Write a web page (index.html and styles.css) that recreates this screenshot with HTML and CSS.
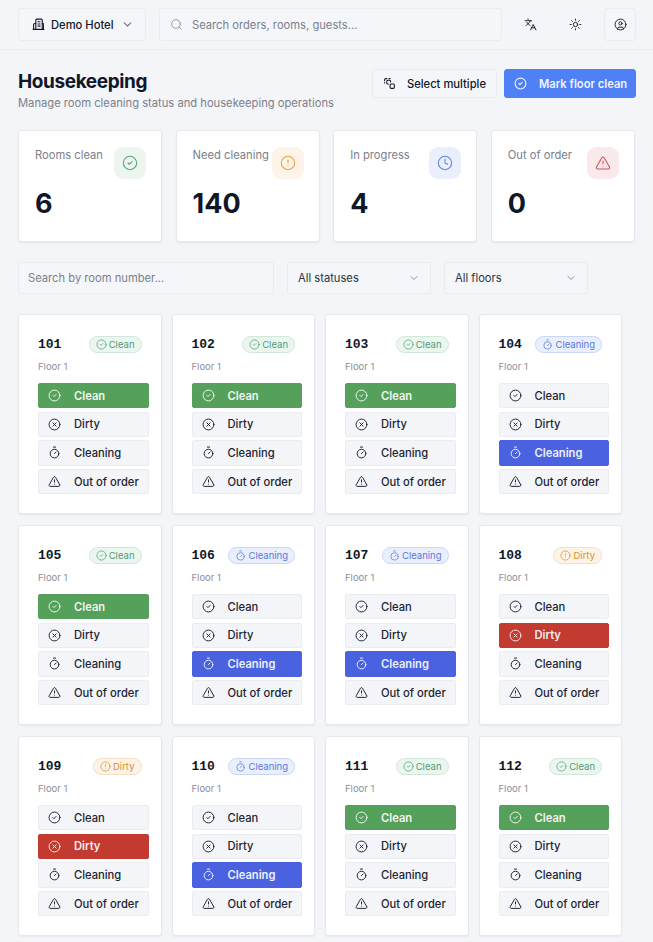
FILE: index.html
```html
<!DOCTYPE html>
<html lang="en">
  <head>
    <meta charset="utf-8" />
    <link rel="stylesheet" href="styles.css">
    <title>Housekeeping</title>
  </head>

  <body>
    <svg class="sprites" width="0" height="0">
      <symbol id="i-check" viewBox="0 0 24 24"><circle cx="12" cy="12" r="10"/><path d="m9 12 2 2 4-4"/></symbol>
      <symbol id="i-x" viewBox="0 0 24 24"><circle cx="12" cy="12" r="10"/><path d="m15 9-6 6"/><path d="m9 9 6 6"/></symbol>
      <symbol id="i-timer" viewBox="0 0 24 24"><path d="M10 2h4"/><path d="m12 14 3-3"/><circle cx="12" cy="14" r="8"/></symbol>
      <symbol id="i-warn" viewBox="0 0 24 24"><path d="m21.73 18-8-14a2 2 0 0 0-3.48 0l-8 14A2 2 0 0 0 4 21h16a2 2 0 0 0 1.73-3"/><path d="M12 9v4"/><path d="M12 17h.01"/></symbol>
      <symbol id="i-alert" viewBox="0 0 24 24"><circle cx="12" cy="12" r="10"/><path d="M12 8v4"/><path d="M12 16h.01"/></symbol>
      <symbol id="i-clock" viewBox="0 0 24 24"><circle cx="12" cy="12" r="10"/><path d="M12 6v6l4 2"/></symbol>
      <symbol id="i-chevron" viewBox="0 0 24 24"><path d="m6 9 6 6 6-6"/></symbol>
    </svg>

    <header class="topbar">
      <button class="hotel">
        <svg class="icon" viewBox="0 0 24 24"><path d="M7 21V4a2 2 0 0 1 2-2h8a2 2 0 0 1 2 2v17"/><path d="M7 10H5a2 2 0 0 0-2 2v9"/><path d="M19 10h2v11"/><path d="M2 21h20"/><path d="M11 7h4"/><path d="M11 11h4"/><path d="M11 15h4"/></svg>
        Demo Hotel
        <svg class="chev"><use href="#i-chevron"/></svg>
      </button>
      <div class="topsearch">
        <svg class="icon" viewBox="0 0 24 24"><circle cx="11" cy="11" r="8"/><path d="m21 21-4.3-4.3"/></svg>
        Search orders, rooms, guests...
      </div>
      <div class="topicons">
        <span class="topicon"><svg class="icon" viewBox="0 0 24 24"><path d="m5 8 6 6"/><path d="m4 14 6-6 2-3"/><path d="M2 5h12"/><path d="M7 2h1"/><path d="m22 22-5-10-5 10"/><path d="M14 18h6"/></svg></span>
        <span class="topicon"><svg class="icon" viewBox="0 0 24 24"><circle cx="12" cy="12" r="4"/><path d="M12 2v2"/><path d="M12 20v2"/><path d="m4.93 4.93 1.41 1.41"/><path d="m17.66 17.66 1.41 1.41"/><path d="M2 12h2"/><path d="M20 12h2"/><path d="m6.34 17.66-1.41 1.41"/><path d="m19.07 4.93-1.41 1.41"/></svg></span>
        <span class="topicon boxed"><svg class="icon" viewBox="0 0 24 24"><circle cx="12" cy="12" r="10"/><circle cx="12" cy="10" r="3"/><path d="M7 20.66V19a2 2 0 0 1 2-2h6a2 2 0 0 1 2 2v1.66"/></svg></span>
      </div>
    </header>

    <main class="page">
      <div class="pagehead">
        <div>
          <h1>Housekeeping</h1>
          <p>Manage room cleaning status and housekeeping operations</p>
        </div>
        <div class="actions">
          <button class="btn">
            <svg class="icon" viewBox="0 0 24 24"><path d="M3 7V5c0-1.1.9-2 2-2h2"/><path d="M3 11v-1"/><path d="M11 3h2"/><path d="M14 9V8a2 2 0 0 0-2-2H9a2 2 0 0 0-2 2v3a2 2 0 0 0 2 2h1"/><rect x="13" y="13" width="8" height="8" rx="2"/></svg>
            Select multiple
          </button>
          <button class="btn primary"><svg class="icon"><use href="#i-check"/></svg>Mark floor clean</button>
        </div>
      </div>

      <section class="stats">
        <div class="stat"><div class="stat-label">Rooms clean</div><span class="stat-icon green"><svg class="icon"><use href="#i-check"/></svg></span><div class="stat-value">6</div></div>
        <div class="stat"><div class="stat-label">Need cleaning</div><span class="stat-icon orange"><svg class="icon"><use href="#i-alert"/></svg></span><div class="stat-value">140</div></div>
        <div class="stat"><div class="stat-label">In progress</div><span class="stat-icon blue"><svg class="icon"><use href="#i-clock"/></svg></span><div class="stat-value">4</div></div>
        <div class="stat"><div class="stat-label">Out of order</div><span class="stat-icon red"><svg class="icon"><use href="#i-warn"/></svg></span><div class="stat-value">0</div></div>
      </section>

      <section class="filters">
        <div class="filter-search">Search by room number...</div>
        <div class="filter-select">All statuses<svg class="chev"><use href="#i-chevron"/></svg></div>
        <div class="filter-select">All floors<svg class="chev"><use href="#i-chevron"/></svg></div>
      </section>

      <section class="rooms" id="rooms">
        <article class="room">
          <div class="room-head"><span class="room-no">101</span><span class="badge clean"><svg class="icon"><use href="#i-check"/></svg>Clean</span></div>
          <div class="floor">Floor 1</div>
          <div class="status-btn on-clean"><svg class="icon"><use href="#i-check"/></svg>Clean</div>
          <div class="status-btn"><svg class="icon"><use href="#i-x"/></svg>Dirty</div>
          <div class="status-btn"><svg class="icon"><use href="#i-timer"/></svg>Cleaning</div>
          <div class="status-btn"><svg class="icon"><use href="#i-warn"/></svg>Out of order</div>
        </article>
        <article class="room">
          <div class="room-head"><span class="room-no">102</span><span class="badge clean"><svg class="icon"><use href="#i-check"/></svg>Clean</span></div>
          <div class="floor">Floor 1</div>
          <div class="status-btn on-clean"><svg class="icon"><use href="#i-check"/></svg>Clean</div>
          <div class="status-btn"><svg class="icon"><use href="#i-x"/></svg>Dirty</div>
          <div class="status-btn"><svg class="icon"><use href="#i-timer"/></svg>Cleaning</div>
          <div class="status-btn"><svg class="icon"><use href="#i-warn"/></svg>Out of order</div>
        </article>
        <article class="room">
          <div class="room-head"><span class="room-no">103</span><span class="badge clean"><svg class="icon"><use href="#i-check"/></svg>Clean</span></div>
          <div class="floor">Floor 1</div>
          <div class="status-btn on-clean"><svg class="icon"><use href="#i-check"/></svg>Clean</div>
          <div class="status-btn"><svg class="icon"><use href="#i-x"/></svg>Dirty</div>
          <div class="status-btn"><svg class="icon"><use href="#i-timer"/></svg>Cleaning</div>
          <div class="status-btn"><svg class="icon"><use href="#i-warn"/></svg>Out of order</div>
        </article>
        <article class="room">
          <div class="room-head"><span class="room-no">104</span><span class="badge cleaning"><svg class="icon"><use href="#i-timer"/></svg>Cleaning</span></div>
          <div class="floor">Floor 1</div>
          <div class="status-btn"><svg class="icon"><use href="#i-check"/></svg>Clean</div>
          <div class="status-btn"><svg class="icon"><use href="#i-x"/></svg>Dirty</div>
          <div class="status-btn on-cleaning"><svg class="icon"><use href="#i-timer"/></svg>Cleaning</div>
          <div class="status-btn"><svg class="icon"><use href="#i-warn"/></svg>Out of order</div>
        </article>
        <article class="room">
          <div class="room-head"><span class="room-no">105</span><span class="badge clean"><svg class="icon"><use href="#i-check"/></svg>Clean</span></div>
          <div class="floor">Floor 1</div>
          <div class="status-btn on-clean"><svg class="icon"><use href="#i-check"/></svg>Clean</div>
          <div class="status-btn"><svg class="icon"><use href="#i-x"/></svg>Dirty</div>
          <div class="status-btn"><svg class="icon"><use href="#i-timer"/></svg>Cleaning</div>
          <div class="status-btn"><svg class="icon"><use href="#i-warn"/></svg>Out of order</div>
        </article>
        <article class="room">
          <div class="room-head"><span class="room-no">106</span><span class="badge cleaning"><svg class="icon"><use href="#i-timer"/></svg>Cleaning</span></div>
          <div class="floor">Floor 1</div>
          <div class="status-btn"><svg class="icon"><use href="#i-check"/></svg>Clean</div>
          <div class="status-btn"><svg class="icon"><use href="#i-x"/></svg>Dirty</div>
          <div class="status-btn on-cleaning"><svg class="icon"><use href="#i-timer"/></svg>Cleaning</div>
          <div class="status-btn"><svg class="icon"><use href="#i-warn"/></svg>Out of order</div>
        </article>
        <article class="room">
          <div class="room-head"><span class="room-no">107</span><span class="badge cleaning"><svg class="icon"><use href="#i-timer"/></svg>Cleaning</span></div>
          <div class="floor">Floor 1</div>
          <div class="status-btn"><svg class="icon"><use href="#i-check"/></svg>Clean</div>
          <div class="status-btn"><svg class="icon"><use href="#i-x"/></svg>Dirty</div>
          <div class="status-btn on-cleaning"><svg class="icon"><use href="#i-timer"/></svg>Cleaning</div>
          <div class="status-btn"><svg class="icon"><use href="#i-warn"/></svg>Out of order</div>
        </article>
        <article class="room">
          <div class="room-head"><span class="room-no">108</span><span class="badge dirty"><svg class="icon"><use href="#i-alert"/></svg>Dirty</span></div>
          <div class="floor">Floor 1</div>
          <div class="status-btn"><svg class="icon"><use href="#i-check"/></svg>Clean</div>
          <div class="status-btn on-dirty"><svg class="icon"><use href="#i-x"/></svg>Dirty</div>
          <div class="status-btn"><svg class="icon"><use href="#i-timer"/></svg>Cleaning</div>
          <div class="status-btn"><svg class="icon"><use href="#i-warn"/></svg>Out of order</div>
        </article>
        <article class="room">
          <div class="room-head"><span class="room-no">109</span><span class="badge dirty"><svg class="icon"><use href="#i-alert"/></svg>Dirty</span></div>
          <div class="floor">Floor 1</div>
          <div class="status-btn"><svg class="icon"><use href="#i-check"/></svg>Clean</div>
          <div class="status-btn on-dirty"><svg class="icon"><use href="#i-x"/></svg>Dirty</div>
          <div class="status-btn"><svg class="icon"><use href="#i-timer"/></svg>Cleaning</div>
          <div class="status-btn"><svg class="icon"><use href="#i-warn"/></svg>Out of order</div>
        </article>
        <article class="room">
          <div class="room-head"><span class="room-no">110</span><span class="badge cleaning"><svg class="icon"><use href="#i-timer"/></svg>Cleaning</span></div>
          <div class="floor">Floor 1</div>
          <div class="status-btn"><svg class="icon"><use href="#i-check"/></svg>Clean</div>
          <div class="status-btn"><svg class="icon"><use href="#i-x"/></svg>Dirty</div>
          <div class="status-btn on-cleaning"><svg class="icon"><use href="#i-timer"/></svg>Cleaning</div>
          <div class="status-btn"><svg class="icon"><use href="#i-warn"/></svg>Out of order</div>
        </article>
        <article class="room">
          <div class="room-head"><span class="room-no">111</span><span class="badge clean"><svg class="icon"><use href="#i-check"/></svg>Clean</span></div>
          <div class="floor">Floor 1</div>
          <div class="status-btn on-clean"><svg class="icon"><use href="#i-check"/></svg>Clean</div>
          <div class="status-btn"><svg class="icon"><use href="#i-x"/></svg>Dirty</div>
          <div class="status-btn"><svg class="icon"><use href="#i-timer"/></svg>Cleaning</div>
          <div class="status-btn"><svg class="icon"><use href="#i-warn"/></svg>Out of order</div>
        </article>
        <article class="room">
          <div class="room-head"><span class="room-no">112</span><span class="badge clean"><svg class="icon"><use href="#i-check"/></svg>Clean</span></div>
          <div class="floor">Floor 1</div>
          <div class="status-btn on-clean"><svg class="icon"><use href="#i-check"/></svg>Clean</div>
          <div class="status-btn"><svg class="icon"><use href="#i-x"/></svg>Dirty</div>
          <div class="status-btn"><svg class="icon"><use href="#i-timer"/></svg>Cleaning</div>
          <div class="status-btn"><svg class="icon"><use href="#i-warn"/></svg>Out of order</div>
        </article>
      </section>
    </main>
  </body>
</html>
```

FILE: styles.css
```css
* {
  box-sizing: border-box;
}

body {
  margin: 0;
  background-color: #f3f5f9;
  color: #0f1729;
  font-family: Inter, "Noto Sans", sans-serif;
  font-size: 11.2px;
  height: 942px;
  overflow: hidden;
}

button {
  font: inherit;
  color: inherit;
}

.sprites {
  position: absolute;
}

.icon,
.chev {
  fill: none;
  stroke: currentColor;
  stroke-width: 2;
  stroke-linecap: round;
  stroke-linejoin: round;
  flex: none;
  width: 13px;
  height: 13px;
}

.chev {
  color: #6b7280;
}

/* top bar */
.topbar {
  display: flex;
  align-items: center;
  height: 50px;
  padding: 8px 17px 8px 18px;
  border-bottom: 1px solid #eceef2;
}

.hotel {
  display: flex;
  align-items: center;
  width: 128px;
  height: 33px;
  padding: 0 0 0 13px;
  gap: 6px;
  font-weight: 500;
  background: #f4f6f9;
  border: 1px solid #eaecf0;
  border-radius: 3px;
}

.hotel .chev {
  margin-left: 1px;
}

.topsearch {
  display: flex;
  align-items: center;
  gap: 9px;
  width: 343px;
  height: 33px;
  margin-left: 13px;
  padding-left: 10px;
  color: #7b818c;
  background: #f4f6f9;
  border: 1px solid #eaecf0;
  border-radius: 3px;
}

.topsearch .icon {
  stroke-width: 1.6;
  color: #8a8f98;
}

.topicons {
  display: flex;
  margin-left: auto;
  gap: 13px;
}

.topicon {
  display: flex;
  align-items: center;
  justify-content: center;
  width: 32px;
  height: 33px;
}

.topicon.boxed {
  background: #f4f6f9;
  border: 1px solid #eaecf0;
  border-radius: 3px;
}

.topicon .icon {
  stroke-width: 1.7;
}

/* page */
.page {
  padding: 19px 17px 0 18px;
}

.pagehead {
  display: flex;
  justify-content: space-between;
  align-items: flex-start;
  height: 61px;
}

h1 {
  margin: 0;
  font-size: 19px;
  line-height: 25px;
  font-weight: 700;
  letter-spacing: -0.4px;
}

.pagehead p {
  margin: 0;
  color: #7b808a;
  font-size: 11.2px;
  line-height: 18px;
}

.actions {
  display: flex;
  gap: 7px;
}

.btn {
  display: flex;
  align-items: center;
  gap: 11px;
  height: 29px;
  padding: 0 10px;
  font-weight: 500;
  white-space: nowrap;
  background: #f5f6f9;
  border: 1px solid #eaecf0;
  border-radius: 3px;
}

.btn.primary {
  width: 132px;
  padding: 0 9px;
  gap: 12px;
  color: #f1f5fe;
  font-weight: 600;
  background: #4f80f5;
  border-color: #4f80f5;
}

.stats {
  display: grid;
  grid-template-columns: repeat(4, 1fr);
  gap: 13.4px;
  margin-right: 1px;
}

.stat {
  position: relative;
  height: 112px;
  padding: 17px 16px;
  background: #fff;
  border: 1px solid #e6e8ec;
  border-radius: 3px;
  box-shadow: 0 1px 2px rgba(15, 23, 41, 0.06);
}

.stat-label {
  color: #7b808a;
  line-height: 14px;
}

.stat-icon {
  position: absolute;
  top: 16px;
  right: 15px;
  display: flex;
  align-items: center;
  justify-content: center;
  width: 32px;
  height: 32px;
  border-radius: 9px;
}

.stat-icon .icon {
  width: 16px;
  height: 16px;
  stroke-width: 1.6;
}

.stat-icon.green { background: #ecf6ef; color: #55a57e; }
.stat-icon.orange { background: #fdf3e8; color: #e6a23c; }
.stat-icon.blue { background: #e9effd; color: #5d84e6; }
.stat-icon.red { background: #fae9ea; color: #d0555a; }

.stat-value {
  margin-top: 26px;
  font-size: 27px;
  line-height: 32px;
  font-weight: 700;
}

.filters {
  display: flex;
  gap: 13px;
  margin-top: 20px;
}

.filter-search,
.filter-select {
  display: flex;
  align-items: center;
  height: 32px;
  padding-left: 9px;
  background: #f4f6f9;
  border: 1px solid #eaecf0;
  border-radius: 2px;
}

.filter-search {
  width: 256px;
  color: #7b818c;
}

.filter-select {
  justify-content: space-between;
  width: 144px;
  padding-left: 10px;
  padding-right: 10px;
  color: #2b3240;
}

.filter-select .chev {
  width: 12px;
  height: 12px;
  stroke-width: 1.5;
}

/* room cards */
.rooms {
  display: grid;
  grid-template-columns: repeat(4, 143.5px);
  gap: 11px 10px;
  margin-top: 20px;
}

.room {
  height: 200px;
  padding: 18px 12px 0 19px;
  background: #fff;
  border: 1px solid #e6e8ec;
  border-radius: 3px;
  box-shadow: 0 1px 2px rgba(15, 23, 41, 0.06);
}

.room-head {
  display: flex;
  justify-content: space-between;
  align-items: center;
  height: 22px;
  margin-right: 7px;
  margin-bottom: 5px;
}

.room-no {
  padding-top: 1px;
  font-family: "Liberation Mono", monospace;
  font-size: 13px;
  font-weight: 700;
}

.badge {
  display: flex;
  align-items: center;
  gap: 2px;
  height: 17px;
  padding: 0 6px;
  font-size: 9.5px;
  border: 1px solid;
  border-radius: 9px;
}

.badge .icon {
  width: 11px;
  height: 11px;
  stroke-width: 1.6;
}

.badge.clean { color: #4f9c79; background: #ebf6ef; border-color: #cfe8d9; }
.badge.cleaning { color: #5a78dc; background: #e9effd; border-color: #c9d6f7; }
.badge.dirty { color: #d79033; background: #fdf3e6; border-color: #f5dfc0; }

.floor {
  color: #8a8f98;
  font-size: 9.5px;
  line-height: 14px;
  margin-bottom: 9px;
}

.status-btn {
  display: flex;
  align-items: center;
  gap: 13px;
  height: 25.3px;
  margin-bottom: 3.37px;
  padding-left: 9px;
  font-weight: 500;
  white-space: nowrap;
  color: #1c2433;
  background: #f3f5f8;
  border: 1px solid #eaecf0;
  border-radius: 2px;
}

.status-btn .icon {
  stroke-width: 1.8;
}

.status-btn.on-clean { color: #f2f8f2; font-weight: 600; background: #55a05a; border-color: #55a05a; }
.status-btn.on-cleaning { color: #eef1fd; font-weight: 600; background: #4a62e0; border-color: #4a62e0; }
.status-btn.on-dirty { color: #fbeeed; font-weight: 600; background: #c23a30; border-color: #c23a30; }
```
